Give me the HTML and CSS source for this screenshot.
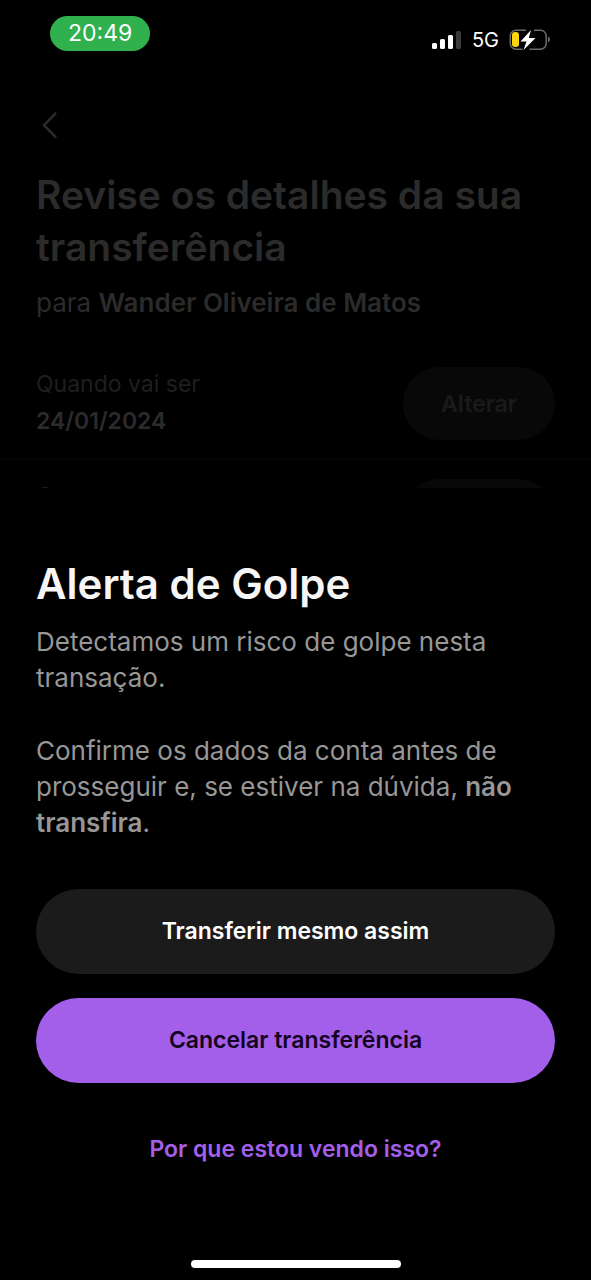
FILE: index.html
```
<!DOCTYPE html>
<html lang="pt-BR">
<head>
<meta charset="utf-8">
<meta name="viewport" content="width=device-width, initial-scale=1">
<title>Alerta de Golpe</title>
<link rel="stylesheet" href="styles.css">
</head>
<body>
<div class="screen">
  <header class="status">
    <time class="clock">20:49</time>
    <div class="indicators">
      <svg class="signal" width="30" height="20" viewBox="0 0 30 20" aria-hidden="true">
        <rect x="0" y="13" width="5" height="6" rx="1.5" fill="#fff"/>
        <rect x="8" y="9" width="5" height="10" rx="1.5" fill="#fff"/>
        <rect x="16" y="5" width="5" height="14" rx="1.5" fill="#fff"/>
        <rect x="24" y="1" width="5" height="18" rx="1.5" fill="#3a3a3a"/>
      </svg>
      <span class="network">5G</span>
      <svg class="battery" width="42" height="22" viewBox="0 0 42 22" aria-hidden="true">
        <path d="M17 1.3H7A5.7 5.7 0 0 0 1.3 7v7.5A5.7 5.7 0 0 0 7 20.2h6.500M25 1.300h6.500A5.700 5.700 0 0 1 37.200 7v7.500a5.700 5.700 0 0 1-5.700 5.700H20.500" fill="none" stroke="#6c6c6c" stroke-width="1.500"/>
        <path d="M39 7.500q2 1 2 3t-2 3z" fill="#6c6c6c"/>
        <rect x="3" y="3" width="7" height="15" rx="3" fill="#fed40c"/>
        <path d="M22 1 11.500 12.500h6L14.500 21 26.500 9h-6.700z" fill="#fff"/>
      </svg>
    </div>
  </header>

  <main class="review">
    <button class="back" type="button" aria-label="Voltar">
      <svg width="18" height="28" viewBox="0 0 18 28" aria-hidden="true"><path d="M15 2 3 14.200 15 26.500" fill="none" stroke="#2b2b2b" stroke-width="2.500"/></svg>
    </button>
    <h1 class="review-title">Revise os detalhes da sua transferência</h1>
    <p class="recipient">para <strong>Wander Oliveira de Matos</strong></p>
    <section class="row">
      <div class="row-text">
        <span class="row-label">Quando vai ser</span>
        <strong class="row-value">24/01/2024</strong>
      </div>
      <button class="change" type="button">Alterar</button>
    </section>
    <section class="row">
      <div class="row-text">
        <span class="row-label">Conta</span>
      </div>
      <button class="change" type="button" aria-label="Alterar conta"></button>
    </section>
  </main>

  <section class="sheet" role="dialog" aria-labelledby="alert-title">
    <h2 class="sheet-title" id="alert-title">Alerta de Golpe</h2>
    <div class="message">
      <p>Detectamos um risco de golpe nesta transação.</p>
      <p>Confirme os dados da conta antes de prosseguir e, se estiver na dúvida, <strong>não transfira</strong>.</p>
    </div>
    <div class="actions">
      <button class="action action-secondary" type="button">Transferir mesmo assim</button>
      <button class="action action-primary" type="button">Cancelar transferência</button>
      <a class="why" href="#">Por que estou vendo isso?</a>
    </div>
    <div class="home"></div>
  </section>
</div>
</body>
</html>
```

FILE: styles.css
```
* { box-sizing: border-box; }
body {
  margin: 0;
  background: #000;
  font-family: Inter, "Liberation Sans", sans-serif;
}
h1, h2, p { margin: 0; }
button { border: 0; padding: 0; font-family: inherit; }
strong { font-weight: 600; }

.screen {
  display: flex;
  flex-direction: column;
  height: 100vh;
  overflow: hidden;
}

.status {
  display: flex;
  flex: none;
  justify-content: space-between;
  align-items: flex-start;
  padding: 16px 40px 0 50px;
  color: #fff;
}
.clock {
  padding: 0 18px;
  border-radius: 18px;
  background: #30b14e;
  font-size: 23px;
  line-height: 35px;
}
.indicators {
  display: flex;
  align-items: center;
  gap: 10px;
  padding-top: 11px;
}
.network { font-size: 20px; line-height: 26px; }

.review {
  flex: 1 1 0;
  min-height: 0;
  overflow: hidden;
  padding-top: 58px;
  color: #2b2b2b;
}
.back {
  display: block;
  height: 28px;
  margin-left: 41px;
  background: none;
}
.review-title {
  padding: 0 36px;
  margin-top: 30px;
  font-size: 39px;
  font-weight: 600;
  line-height: 52px;
}
.recipient {
  padding: 0 36px;
  margin: 12px 0 27px;
  font-size: 26px;
  line-height: 36px;
}
.row {
  display: flex;
  justify-content: space-between;
  align-items: flex-start;
  padding: 19px 36px 18px;
  border-bottom: 1px solid #070707;
}
.row-text { display: flex; flex-direction: column; }
.row-label { color: #1f1f1f; font-size: 23px; line-height: 35px; }
.row-value { font-size: 23px; line-height: 39px; }
.change {
  width: 152px;
  height: 73px;
  border-radius: 37px;
  background: #080808;
  color: #1a1a1a;
  font-size: 23px;
  font-weight: 600;
}

.sheet {
  display: flex;
  flex: none;
  flex-direction: column;
  padding: 70px 36px 12px;
  background: #000;
}
.sheet-title {
  color: #f6f6f6;
  font-size: 42px;
  font-weight: 600;
  line-height: 52px;
}
.message {
  display: grid;
  gap: 37px;
  margin-top: 14px;
  color: #979797;
  font-size: 26px;
  line-height: 36px;
}
.actions {
  display: flex;
  flex-direction: column;
  gap: 24px;
  margin-top: 48px;
}
.action {
  height: 85px;
  padding-bottom: 2px;
  border-radius: 43px;
  font-size: 23px;
  font-weight: 600;
}
.action-secondary { background: #1b1b1b; color: #fff; }
.action-primary { background: #a35fe9; color: #14031f; }
.why {
  align-self: center;
  margin-top: 24px;
  color: #a35fe9;
  font-size: 23px;
  font-weight: 600;
  line-height: 36px;
  text-decoration: none;
}
.home {
  align-self: center;
  width: 210px;
  height: 8px;
  margin-top: 93px;
  border-radius: 4px;
  background: #fff;
}
```
